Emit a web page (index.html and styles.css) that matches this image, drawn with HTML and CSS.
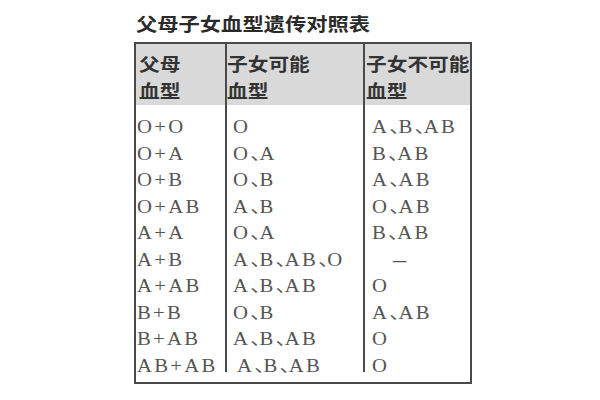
FILE: index.html
```html
<!DOCTYPE html>
<html lang="zh">
<head>
<meta charset="utf-8">
<title>父母子女血型遗传对照表</title>
<link rel="stylesheet" href="styles.css">
</head>
<body>
<div class="page">
  <h1 class="title"><span class="sx">父母子女血型遗传对照表</span></h1>
  <div class="box">
    <div class="head">
      <div class="hc c1"><div class="sx">父母<br>血型</div></div>
      <div class="hc c2"><div class="sx">子女可能<br>血型</div></div>
      <div class="hc c3"><div class="sx">子女不可能<br>血型</div></div>
    </div>
    <div class="rows">
      <div class="col c1">
        <div class="r"><span class="sx">O+O</span></div>
        <div class="r"><span class="sx">O+A</span></div>
        <div class="r"><span class="sx">O+B</span></div>
        <div class="r"><span class="sx">O+AB</span></div>
        <div class="r"><span class="sx">A+A</span></div>
        <div class="r"><span class="sx">A+B</span></div>
        <div class="r"><span class="sx">A+AB</span></div>
        <div class="r"><span class="sx">B+B</span></div>
        <div class="r"><span class="sx">B+AB</span></div>
        <div class="r"><span class="sx">AB+AB</span></div>
      </div>
      <div class="col c2">
        <div class="r"><span class="sx">O</span></div>
        <div class="r"><span class="sx">O<span class="d">、</span>A</span></div>
        <div class="r"><span class="sx">O<span class="d">、</span>B</span></div>
        <div class="r"><span class="sx">A<span class="d">、</span>B</span></div>
        <div class="r"><span class="sx">O<span class="d">、</span>A</span></div>
        <div class="r"><span class="sx">A<span class="d">、</span>B<span class="d">、</span>AB<span class="d">、</span>O</span></div>
        <div class="r"><span class="sx">A<span class="d">、</span>B<span class="d">、</span>AB</span></div>
        <div class="r"><span class="sx">O<span class="d">、</span>B</span></div>
        <div class="r"><span class="sx">A<span class="d">、</span>B<span class="d">、</span>AB</span></div>
        <div class="r indent"><span class="sx">A<span class="d">、</span>B<span class="d">、</span>AB</span></div>
      </div>
      <div class="col c3">
        <div class="r"><span class="sx">A<span class="d">、</span>B<span class="d">、</span>AB</span></div>
        <div class="r"><span class="sx">B<span class="d">、</span>AB</span></div>
        <div class="r"><span class="sx">A<span class="d">、</span>AB</span></div>
        <div class="r"><span class="sx">O<span class="d">、</span>AB</span></div>
        <div class="r"><span class="sx">B<span class="d">、</span>AB</span></div>
        <div class="r dash"><span class="sx dx">–</span></div>
        <div class="r"><span class="sx">O</span></div>
        <div class="r"><span class="sx">A<span class="d">、</span>AB</span></div>
        <div class="r"><span class="sx">O</span></div>
        <div class="r"><span class="sx">O</span></div>
      </div>
    </div>
  </div>
</div>
</body>
</html>
```

FILE: styles.css
```css
html, body {
  margin: 0;
  padding: 0;
  background: #ffffff;
}

.page {
  padding: 11px 0 0 134px;
}

.sx {
  display: inline-block;
  white-space: nowrap;
  transform: scaleX(1.15);
  transform-origin: 0 50%;
}

.title {
  margin: 0 0 7px 0;
  padding-left: 2px;
  font: bold 18.5px/24px "Noto Sans CJK SC", sans-serif;
  color: #2a2a2a;
}

.box {
  width: 334px;
  border: 2px solid #4a4a4a;
  background: #ffffff;
}

.head {
  display: grid;
  grid-template-columns: 91px 138px 105px;
  background: #d9d9d9;
}

.hc {
  box-sizing: border-box;
  height: 61px;
  padding-top: 6px;
  font: bold 18px/27px "Noto Sans CJK SC", sans-serif;
  color: #333333;
}

.hc.c1 { padding-left: 3px; border-right: 2px solid #4a4a4a; }
.hc.c2 { padding-left: 0; border-right: 2px solid #4a4a4a; }
.hc.c3 { padding-left: 1px; }

.rows {
  display: grid;
  grid-template-columns: 91px 138px 105px;
  padding-bottom: 10px;
}

.col {
  box-sizing: border-box;
  display: flex;
  flex-direction: column;
  padding-top: 9px;
}

.col.c1 { padding-left: 1px; border-right: 2px solid #4a4a4a; }
.col.c2 { padding-left: 6px; border-right: 2px solid #4a4a4a; }
.col.c3 { padding-left: 7px; }

.r {
  height: 26.5px;
  font: 18px/26.5px "Liberation Serif", "Noto Sans CJK SC", serif;
  letter-spacing: 2px;
  color: #555555;
}

.r:last-child {
  margin-bottom: -7px;
}

.r.indent { padding-left: 4px; }
.r.dash { padding-left: 21px; }

.dx {
  font-size: 23px;
  line-height: 26.5px;
}

.d {
  font-family: "Noto Sans CJK SC", sans-serif;
  line-height: 0;
  letter-spacing: -10px;
}
```
